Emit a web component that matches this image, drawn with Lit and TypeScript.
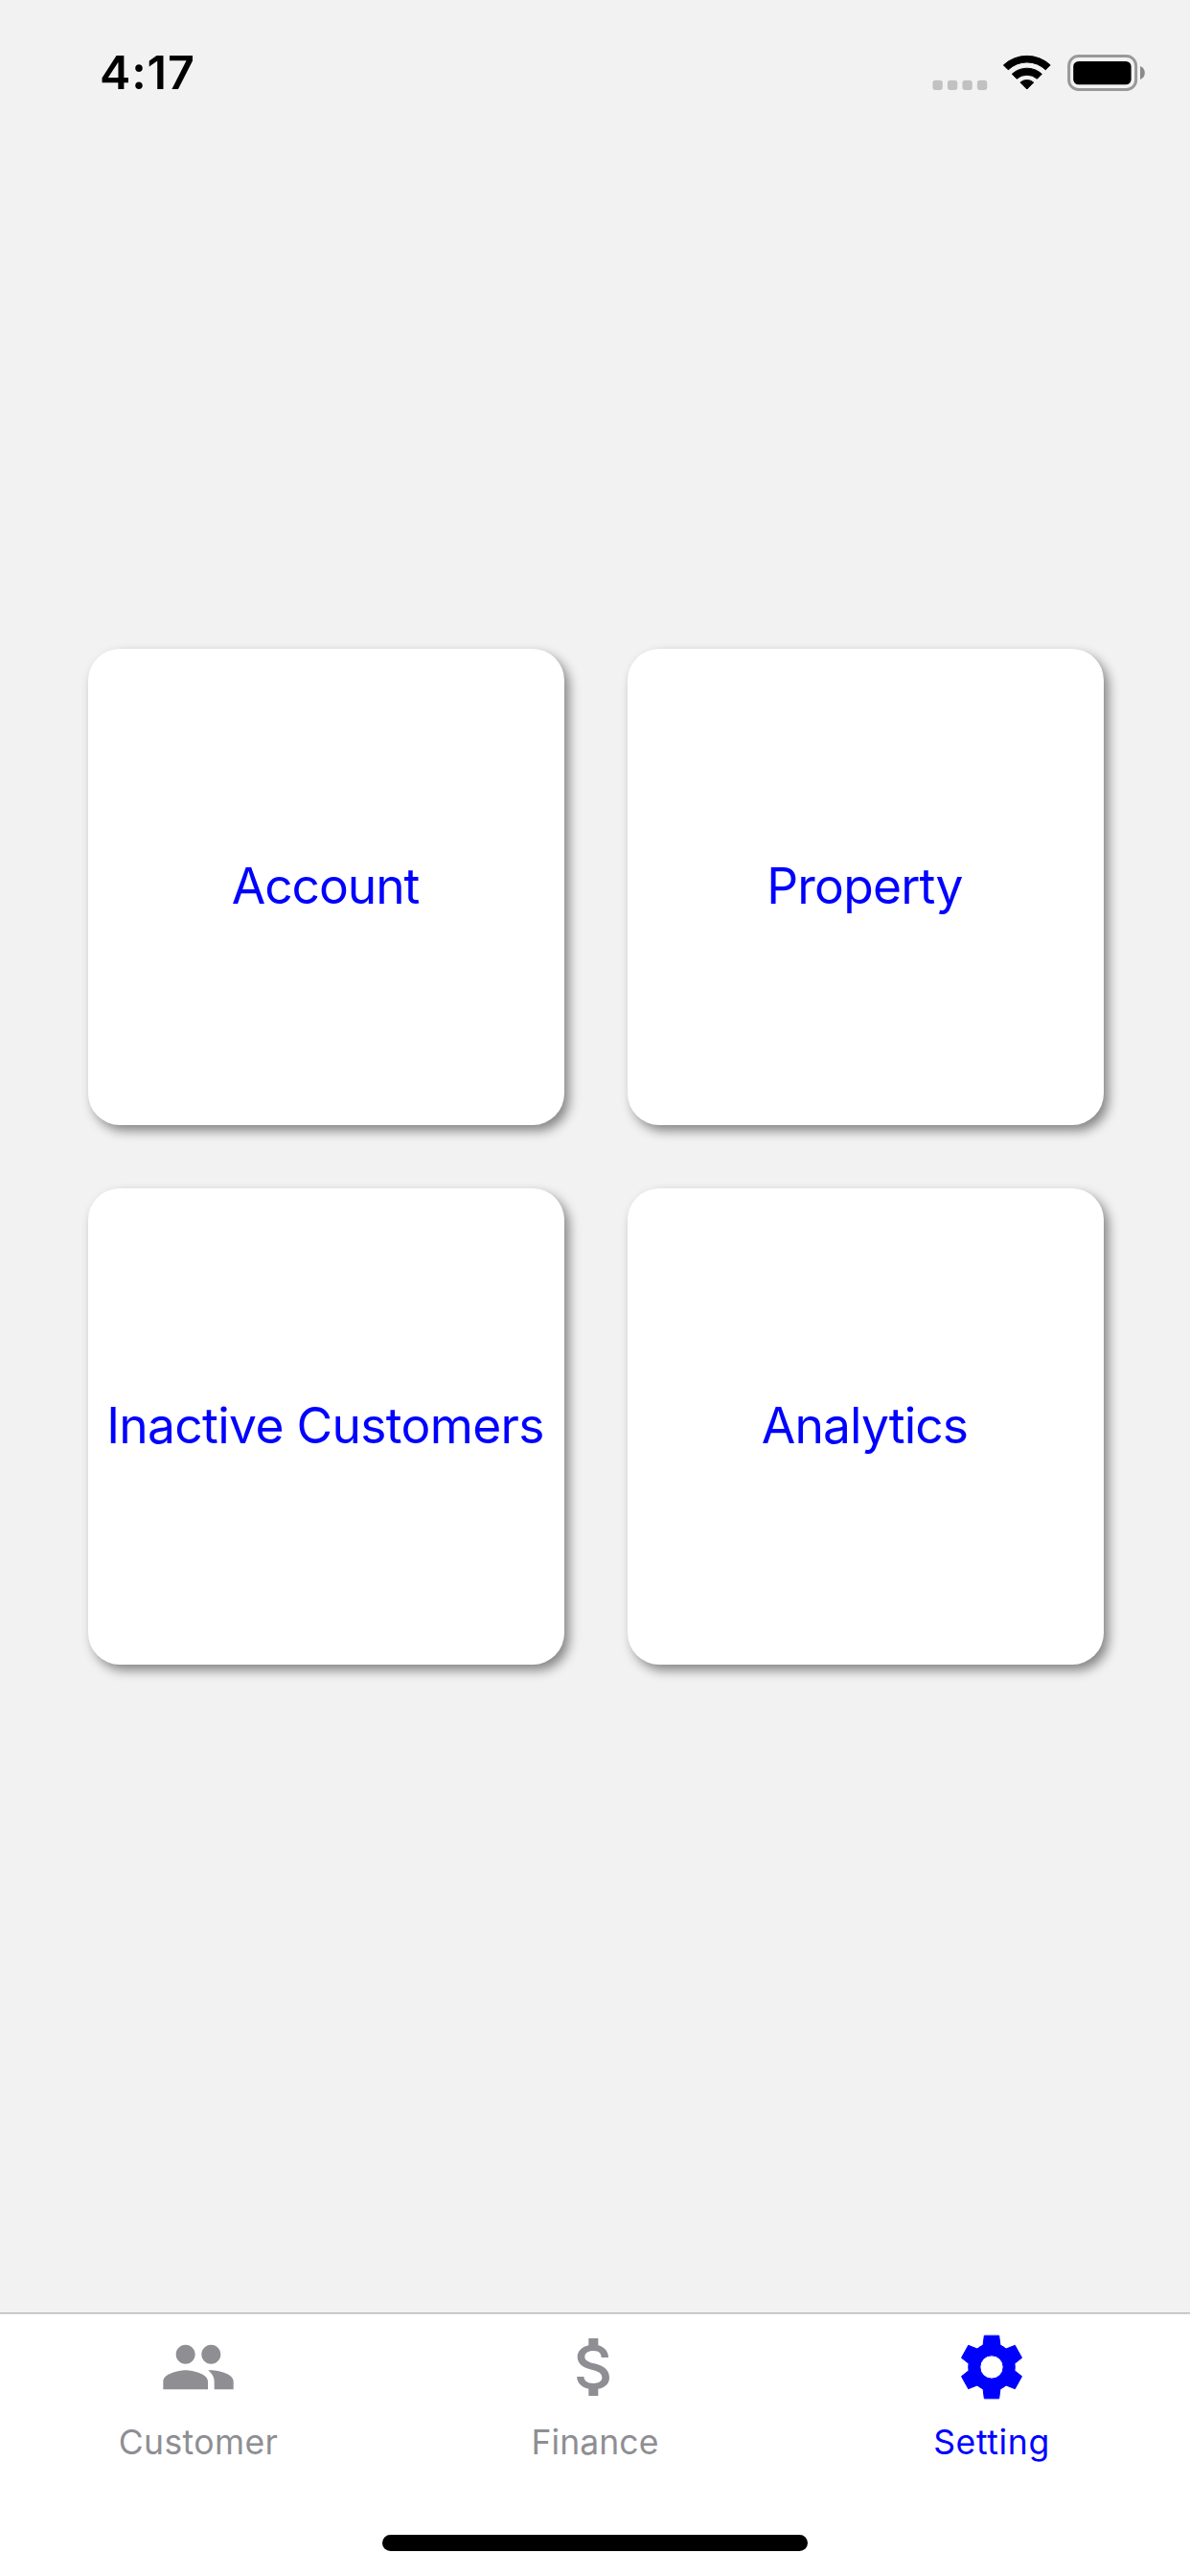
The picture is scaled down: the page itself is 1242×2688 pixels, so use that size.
import { LitElement, html, css, svg } from "lit";
import { customElement, property } from "lit/decorators.js";
import { classMap } from "lit/directives/class-map.js";
import { styleMap } from "lit/directives/style-map.js";

const FONT = css`Inter, "Liberation Sans", sans-serif`;

const ICONS = {
  people: svg`<path d="M16 11c1.66 0 2.99-1.34 2.99-3S17.66 5 16 5s-3 1.34-3 3 1.34 3 3 3zm-8 0c1.66 0 2.99-1.34 2.99-3S9.66 5 8 5 5 6.34 5 8s1.34 3 3 3zm0 2c-2.33 0-7 1.17-7 3.5V19h14v-2.5c0-2.33-4.67-3.5-7-3.5zm8 0c-.29 0-.62.02-.97.05 1.16.84 1.97 1.97 1.97 3.45V19h6v-2.5c0-2.33-4.67-3.5-7-3.5z"/>`,
  dollar: svg`<path d="M11.8 10.9c-2.27-.59-3-1.2-3-2.15 0-1.09 1.01-1.85 2.7-1.85 1.78 0 2.44.85 2.5 2.1h2.21c-.07-1.72-1.12-3.3-3.21-3.81V3h-3v2.16c-1.94.42-3.5 1.68-3.5 3.61 0 2.31 1.91 3.46 4.7 4.13 2.5.6 3 1.48 3 2.41 0 .69-.49 1.79-2.7 1.79-2.06 0-2.87-.92-2.98-2.1h-2.2c.12 2.19 1.76 3.42 3.68 3.83V21h3v-2.15c1.95-.37 3.5-1.5 3.5-3.55 0-2.84-2.43-3.81-4.7-4.4z"/>`,
  settings: svg`<path stroke="currentColor" stroke-width="0.3" stroke-linejoin="round" d="M9.7 2.15H14.3L14.68 5.13Q15.7 5.6 16.5 6.3L19.3 5.2L21.45 9.1L19.19 10.88Q19.34 12 19.19 13.12L21.45 14.9L19.3 18.8L16.5 17.7Q15.7 18.4 14.68 18.87L14.3 21.85H9.7L9.32 18.87Q8.3 18.4 7.5 17.7L4.7 18.8L2.55 14.9L4.81 13.12Q4.66 12 4.81 10.88L2.55 9.1L4.7 5.2L7.5 6.3Q8.3 5.6 9.32 5.13ZM12 8.35A3.65 3.65 0 0 0 12 15.65A3.65 3.65 0 0 0 12 8.35Z"/>`,
};

@customElement("status-bar")
class StatusBar extends LitElement {
  static styles = css`
    :host {
      display: flex;
      justify-content: space-between;
      align-items: flex-start;
      height: 132px;
      box-sizing: border-box;
      padding: 57px 47px 0 104px;
      font-family: ${FONT};
    }
    .time {
      font-size: 48.5px;
      line-height: 38px;
      font-weight: 600;
      letter-spacing: 0.9px;
      color: #000;
    }
    .indicators {
      display: block;
      width: 222px;
      height: 38px;
    }
  `;
  render() {
    return html`
      <span class="time">4:17</span>
      <svg class="indicators" viewBox="0 0 222 38">
        ${[0, 15.5, 31, 46.5].map(
          (x) => svg`<rect x=${x + 0.4} y="26.8" width="10.4" height="10.2" rx="3" fill="#c1c1c1"/>`
        )}
        <g stroke="#000" stroke-width="1" stroke-linejoin="round">
          <path d="M74.4 10.9A36 36 0 0 1 123.2 10.9L118.3 15.8A28 28 0 0 0 79.3 15.8Z"/>
          <path d="M83.3 20.2A23 23 0 0 1 114.3 20.2L109.4 25.2A16 16 0 0 0 88.2 25.2Z"/>
          <path d="M91.9 29A10.5 10.5 0 0 1 105.7 29L98.8 36Z"/>
        </g>
        <rect x="142.6" y="1.6" width="70" height="34.8" rx="10" fill="none" stroke="#999" stroke-width="3"/>
        <rect x="147.2" y="7" width="60.4" height="24.3" rx="5.5"/>
        <path d="M217 12C223.4 14.4 223.4 23.6 217 26Z" fill="#8a8a8a"/>
      </svg>
    `;
  }
}

@customElement("menu-card")
class MenuCard extends LitElement {
  @property() label = "";
  @property({ type: Number }) tracking = 0;
  static styles = css`
    :host {
      display: flex;
      align-items: center;
      justify-content: center;
      box-sizing: border-box;
      padding: 0 2px 3px 0;
      background: #fff;
      border-radius: 33px;
      box-shadow: 5px 6px 12px rgba(0, 0, 0, 0.45);
      font-family: ${FONT};
    }
    .label {
      font-size: 51.5px;
      line-height: 60px;
      color: #00f;
      white-space: nowrap;
    }
  `;
  render() {
    return html`<span class="label" style=${styleMap({ letterSpacing: `${this.tracking}px` })}>${this.label}</span>`;
  }
}

@customElement("tab-item")
class TabItem extends LitElement {
  @property() label = "";
  @property() icon: keyof typeof ICONS = "people";
  @property({ type: Number }) tracking = 0;
  @property({ type: Boolean }) active = false;
  static styles = css`
    :host {
      flex: 1;
      font-family: ${FONT};
    }
    .tab {
      display: flex;
      flex-direction: column;
      align-items: center;
      gap: 17px;
      padding-top: 15px;
      color: #8e8e93;
    }
    .active {
      color: #00f;
    }
    .icon {
      width: 80px;
      height: 80px;
      fill: currentColor;
    }
    .label {
      font-size: 35.5px;
      line-height: 44px;
      white-space: nowrap;
    }
  `;
  render() {
    return html`
      <div class=${classMap({ tab: true, active: this.active })}>
        <svg class="icon" viewBox="0 0 24 24">${ICONS[this.icon]}</svg>
        <span class="label" style=${styleMap({ letterSpacing: `${this.tracking}px` })}>${this.label}</span>
      </div>
    `;
  }
}

@customElement("app-root")
class AppRoot extends LitElement {
  static styles = css`
    :host {
      display: flex;
      flex-direction: column;
      width: 1242px;
      height: 2688px;
      background: #f2f2f2;
    }
    .content {
      flex: 1;
      display: flex;
      align-items: flex-start;
      padding: 545px 90px 0 92px;
    }
    .grid {
      display: grid;
      grid-template-columns: 497px 497px;
      grid-auto-rows: 497px;
      gap: 66px;
    }
    .bottom {
      display: flex;
      flex-direction: column;
      align-items: center;
      justify-content: space-between;
      box-sizing: border-box;
      height: 275px;
      padding: 1px 0 26.5px;
      border-top: 1px solid #b9b9b9;
      box-shadow: inset 0 1px #dcdcdc;
      background: #fff;
    }
    .tabs {
      display: flex;
      width: 100%;
    }
    .home {
      width: 444px;
      height: 16.5px;
      border-radius: 9px;
      background: #000;
    }
  `;
  render() {
    return html`
      <status-bar></status-bar>
      <main class="content">
        <div class="grid">
          <menu-card label="Account" tracking="-1.05"></menu-card>
          <menu-card label="Property" tracking="-0.8"></menu-card>
          <menu-card label="Inactive Customers" tracking="-0.66"></menu-card>
          <menu-card label="Analytics" tracking="-0.88"></menu-card>
        </div>
      </main>
      <footer class="bottom">
        <nav class="tabs">
          <tab-item icon="people" label="Customer" tracking="0.4"></tab-item>
          <tab-item icon="dollar" label="Finance" tracking="0.05"></tab-item>
          <tab-item icon="settings" label="Setting" tracking="0.65" active></tab-item>
        </nav>
        <div class="home"></div>
      </footer>
    `;
  }
}
